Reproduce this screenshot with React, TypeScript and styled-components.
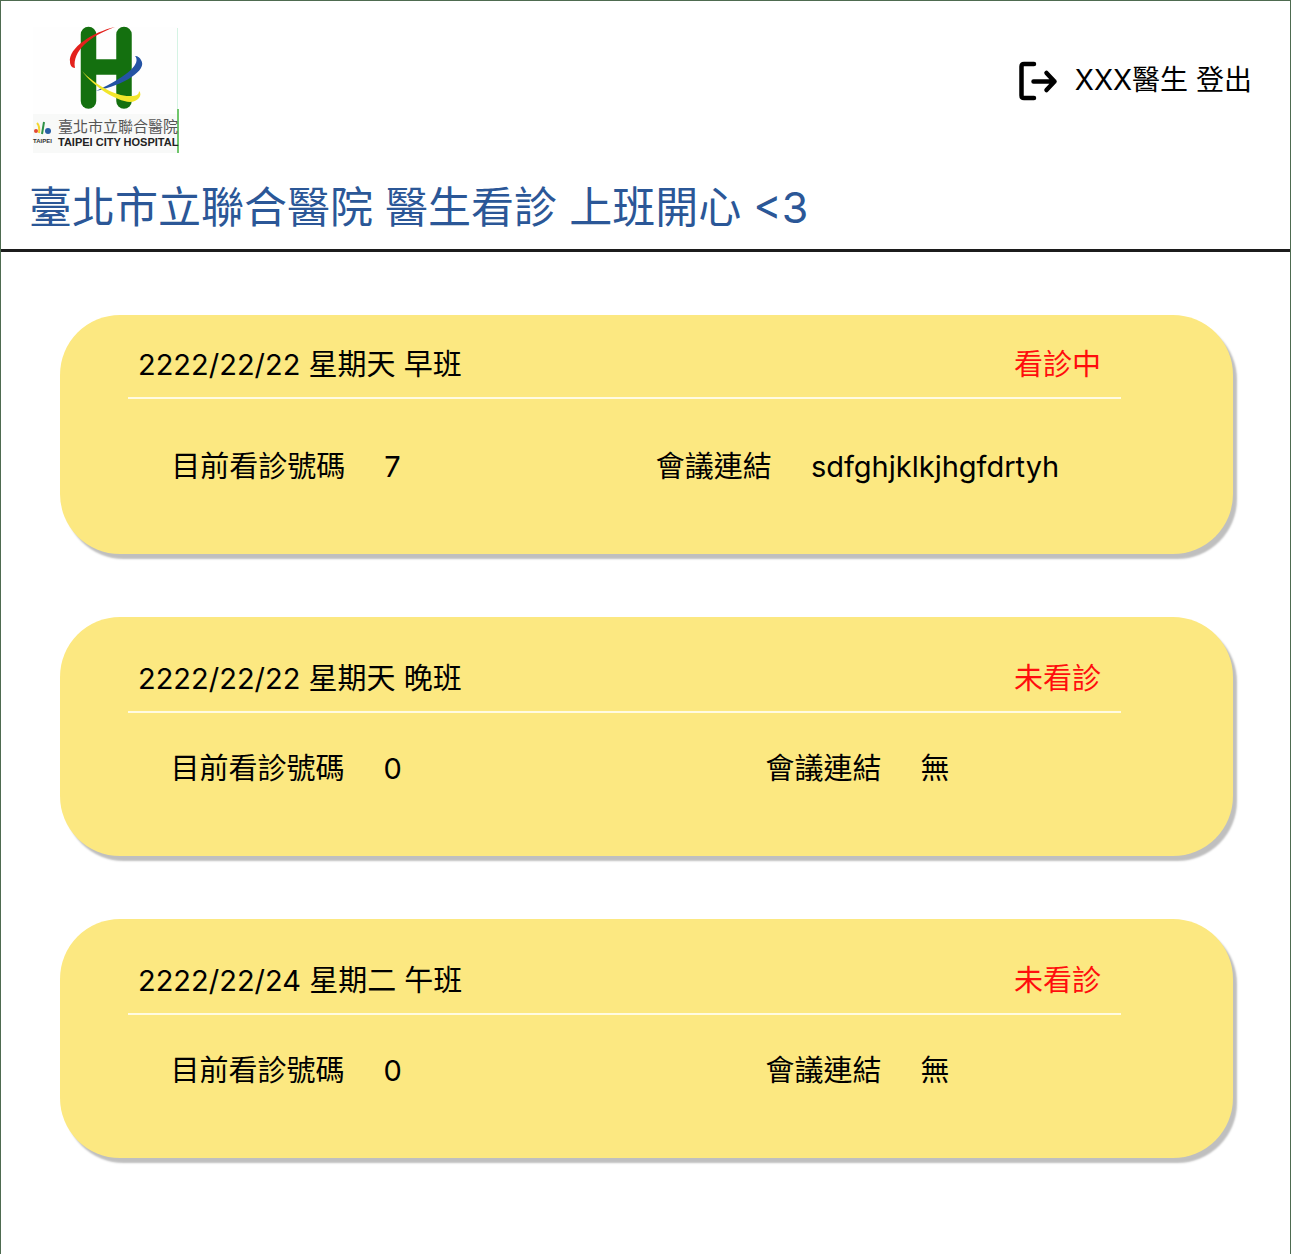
import React from "react";
import styled, { createGlobalStyle } from "styled-components";

const GlobalStyle = createGlobalStyle`
  *, *::before, *::after {
    box-sizing: border-box;
  }

  body {
    margin: 0;
    background: #ffffff;
    color: #000000;
    font-family: Inter, "Noto Sans CJK TC", sans-serif;
    font-size: 28px;
    line-height: 40px;
  }
`;

const Page = styled.div`
  min-height: 100vh;
  border: 1px solid #4e6b50;
  border-bottom: 0;
`;

const Header = styled.header`
  padding: 24px 38px 12px 28px;
  border-bottom: 3px solid #1c1c1c;
`;

const TopBar = styled.div`
  display: flex;
  justify-content: space-between;
  align-items: flex-start;
`;

const Logo = styled.svg`
  display: block;
  width: 150px;
  height: 130px;
`;

const LogoutButton = styled.button`
  display: flex;
  align-items: center;
  gap: 16px;
  margin-top: 34px;
  padding: 0;
  border: 0;
  background: none;
  color: inherit;
  font: inherit;
  cursor: pointer;
`;

const LogoutIcon = styled.svg`
  width: 42px;
  height: 42px;
`;

const Title = styled.h1`
  margin: 22px 0 0;
  color: #2b5797;
  font-size: 43px;
  font-weight: 400;
  line-height: 60px;
`;

const SessionList = styled.main`
  display: flex;
  flex-direction: column;
  gap: 63px;
  padding: 63px 57px 63px 59px;
`;

const Card = styled.article<{ $active: boolean }>`
  min-height: 239px;
  padding: ${({ $active }) => ($active ? "30px" : "42px")} 112px 32px 68px;
  border-radius: 60px;
  background: #fce881;
  box-shadow: 4px 5px 2px #bfbfbf;
  font-size: 29px;
`;

const CardHead = styled.div`
  display: flex;
  justify-content: space-between;
  padding: 0 20px 12px 10px;
  border-bottom: 2px solid #fffbe2;
`;

const SessionName = styled.h2`
  margin: 0;
  font-size: inherit;
  font-weight: 400;
`;

const Status = styled.span`
  color: #ff0d0d;
`;

const Details = styled.dl<{ $active: boolean }>`
  display: grid;
  grid-template-columns: 3fr 5fr;
  column-gap: 150px;
  margin: ${({ $active }) => ($active ? "48px" : "36px")} 0 0;
`;

const Field = styled.div`
  display: flex;
  justify-content: center;
  gap: 39px;
  white-space: nowrap;
`;

const Label = styled.dt`
  margin: 0;
`;

const Value = styled.dd`
  margin: 0;
`;

type Session = {
  name: string;
  status: string;
  current: number;
  link: string;
  active: boolean;
};

const sessions: Session[] = [
  { name: "2222/22/22 星期天 早班", status: "看診中", current: 7, link: "sdfghjklkjhgfdrtyh", active: true },
  { name: "2222/22/22 星期天 晚班", status: "未看診", current: 0, link: "無", active: false },
  { name: "2222/22/24 星期二 午班", status: "未看診", current: 0, link: "無", active: false },
];

function HospitalLogo() {
  return (
    <Logo viewBox="0 0 150 130" role="img" aria-label="臺北市立聯合醫院 Taipei City Hospital">
      <rect x="4" y="2" width="145" height="126" fill="#fefefe" />
      <rect x="4" y="89" width="145" height="39" fill="#f8f9f8" />
      <g stroke="#14700f" strokeWidth="15.500" strokeLinecap="round">
        <path d="M59.500 9.500V76" />
        <path d="M95 9.500V76" />
        <path d="M59 42H95" strokeLinecap="butt" />
      </g>
      <path d="M86 2C64 7 39 23 41 37C41 40 43 43 46 43C43 26 61 11 86 2Z" fill="#e3211c" />
      <path d="M106 31C112 38 101 50 67 66C95 60 119 45 112 35C111 33 109 31 106 31Z" fill="#2453a4" />
      <path d="M53 46C66 60 88 72 102 71C107 71 110 70 110 66C114 70 109 77 101 77C87 76 65 62 53 46Z" fill="#f2e62b" />
      <path d="M148.500 3V84" stroke="#d5f3e4" />
      <path d="M149 84V128" stroke="#70c66c" strokeWidth="2" />
      <circle cx="7" cy="106" r="2" fill="#e44a31" />
      <path d="M10 108Q11 101 8 98" stroke="#f3d72f" strokeWidth="2" fill="none" />
      <path d="M13 109L15 97" stroke="#2d9146" strokeWidth="2" />
      <circle cx="19" cy="106" r="3" fill="#285fa5" />
      <text x="4" y="118" fontFamily="Liberation Sans, sans-serif" fontSize="6" fontWeight="700" fill="#333333">TAIPEI</text>
      <text x="29" y="107" fontFamily="Noto Sans CJK TC, sans-serif" fontSize="15" fill="#555555">臺北市立聯合醫院</text>
      <text x="29" y="121" fontFamily="Liberation Sans, sans-serif" fontSize="11" fontWeight="700" fill="#222222">TAIPEI CITY HOSPITAL</text>
    </Logo>
  );
}

function SessionCard({ session }: { session: Session }) {
  return (
    <Card $active={session.active}>
      <CardHead>
        <SessionName>{session.name}</SessionName>
        <Status>{session.status}</Status>
      </CardHead>
      <Details $active={session.active}>
        <Field>
          <Label>目前看診號碼</Label>
          <Value>{session.current}</Value>
        </Field>
        <Field>
          <Label>會議連結</Label>
          <Value>{session.link}</Value>
        </Field>
      </Details>
    </Card>
  );
}

export default function App() {
  return (
    <Page lang="zh-Hant">
      <GlobalStyle />
      <Header>
        <TopBar>
          <HospitalLogo />
          <LogoutButton type="button">
            <LogoutIcon viewBox="0 0 42 42" fill="none" stroke="#000000" strokeWidth="4.500" strokeLinecap="round" strokeLinejoin="round" aria-hidden="true">
              <path d="M17 5H7Q4.500 5 4.500 7.500V36.500Q4.500 39 7 39H17" />
              <path d="M16.500 22.500H37.500M29.500 14L37.500 22.500L29.500 31" />
            </LogoutIcon>
            <span>XXX醫生 登出</span>
          </LogoutButton>
        </TopBar>
        <Title>臺北市立聯合醫院 醫生看診 上班開心 &lt;3</Title>
      </Header>
      <SessionList>
        {sessions.map((session) => (
          <SessionCard key={session.name} session={session} />
        ))}
      </SessionList>
    </Page>
  );
}
